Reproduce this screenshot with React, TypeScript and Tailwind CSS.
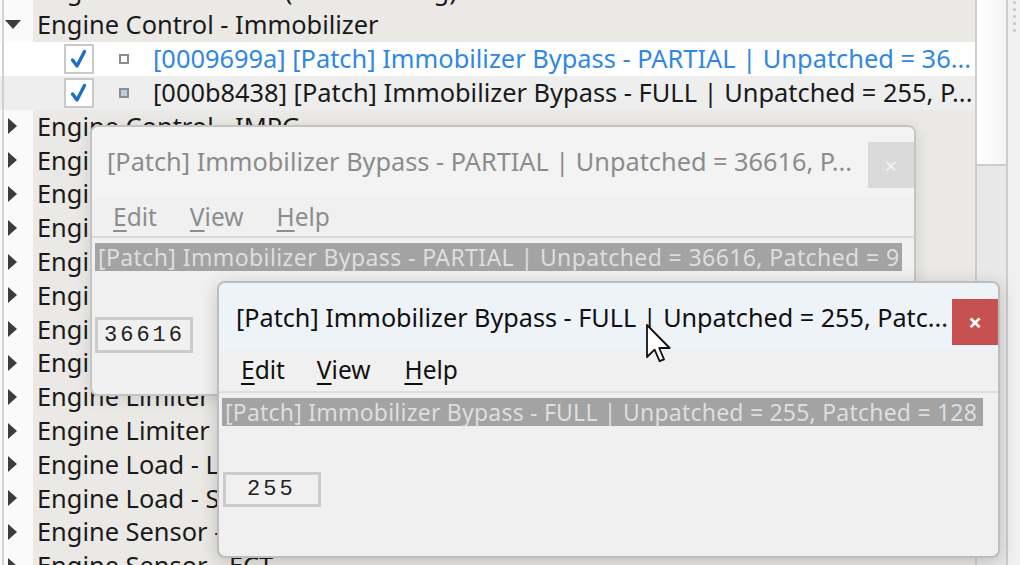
import React from "react";

const font = { fontFamily: '"Noto Sans", "Open Sans", sans-serif' };

type Row = { label: string; kind: "parent" | "open" | "child1" | "child2" };

const rows: Row[] = [
  { label: "Engine Control - Fan (After Cooling)", kind: "parent" },
  { label: "Engine Control - Immobilizer", kind: "open" },
  { label: "[0009699a] [Patch] Immobilizer Bypass - PARTIAL | Unpatched = 36...", kind: "child1" },
  { label: "[000b8438] [Patch] Immobilizer Bypass - FULL | Unpatched = 255, P...", kind: "child2" },
  { label: "Engine Control - IMPG", kind: "parent" },
  { label: "Engine Control - Injection", kind: "parent" },
  { label: "Engine Control - Idle", kind: "parent" },
  { label: "Engine Control - Knock", kind: "parent" },
  { label: "Engine Control - Lambda", kind: "parent" },
  { label: "Engine Control - Misfire", kind: "parent" },
  { label: "Engine Control - Timing", kind: "parent" },
  { label: "Engine Control - VVT", kind: "parent" },
  { label: "Engine Limiter - RPM", kind: "parent" },
  { label: "Engine Limiter - Speed", kind: "parent" },
  { label: "Engine Load - Limits", kind: "parent" },
  { label: "Engine Load - Scaling", kind: "parent" },
  { label: "Engine Sensor - Boost", kind: "parent" },
  { label: "Engine Sensor - ECT", kind: "parent" },
];

function Arrow({ open }: { open: boolean }) {
  return open ? (
    <svg width="16" height="10" viewBox="0 0 16 10" className="ml-[5px]">
      <path d="M0 0 L16 0 L8 9 Z" fill="#3c3c3c" />
    </svg>
  ) : (
    <svg width="10" height="16" viewBox="0 0 10 16" className="ml-[8px]">
      <path d="M0 0 L9 8 L0 16 Z" fill="#3c3c3c" />
    </svg>
  );
}

function Check() {
  return (
    <div className="w-[30px] h-[30px] border-2 border-[#c9c9c9] bg-white flex items-center justify-center shrink-0">
      <svg width="18" height="20" viewBox="0 0 18 20">
        <path d="M2.5 11 L7 17 L14.5 2.5" stroke="#1e6fc6" strokeWidth="3.4" fill="none" strokeLinecap="round" strokeLinejoin="round" />
      </svg>
    </div>
  );
}

function TreeRow({ row }: { row: Row }) {
  if (row.kind === "child1" || row.kind === "child2") {
    const bg = row.kind === "child1" ? "bg-white" : "bg-[#eeeeee]";
    const color = row.kind === "child1" ? "text-[#2f87e6]" : "text-[#1a1a1a]";
    const sq = row.kind === "child1" ? "bg-white" : "bg-[#b9cde0]";
    return (
      <div className={`h-[34px] flex items-center ${bg}`}>
        <div className="w-[64px] h-full flex">
          <div className="w-[2px] ml-[2px] h-full bg-[#d0d0d0]" />
        </div>
        <Check />
        <div className={`ml-[25px] w-[10px] h-[10px] border-2 border-[#8d8d8d] ${sq} shrink-0`} />
        <div className={`ml-[24px] whitespace-nowrap text-[25.4px] leading-none ${color}`} style={font}>
          {row.label}
        </div>
      </div>
    );
  }
  return (
    <div className="h-[33.8px] flex items-center">
      <div className="w-[33px] h-full flex items-center bg-[#fafafa] relative">
        <div className="absolute left-[2px] top-0 w-[2px] h-full bg-[#d6d6d6]" />
        <Arrow open={row.kind === "open"} />
      </div>
      <div className="flex-1 h-full bg-[#ebe9e5] flex items-center pl-[4px]">
        <span className="whitespace-nowrap text-[25.4px] leading-none text-[#1a1a1a]" style={font}>
          {row.label}
        </span>
      </div>
    </div>
  );
}

function Scrollbar() {
  return (
    <div className="flex h-full">
      <div className="w-[31px] h-full border-l-2 border-[#cdcdcd] bg-[#e8e8e8] flex flex-col">
        <div className="h-[166px] border-b-2 border-[#cdcdcd] bg-gradient-to-r from-white to-[#f4f4f4]" />
      </div>
      <div className="w-[14px] h-full border-l-2 border-[#cdcdcd] bg-[#f0f0f0] flex flex-col items-center pt-[1px] gap-[4px]">
        {[0, 1, 2, 3, 4].map((i) => (
          <div key={i} className="w-[3px] h-[3px] bg-[#c4c4c4] rounded-full" />
        ))}
      </div>
    </div>
  );
}

function Menu({ active }: { active: boolean }) {
  const c = active ? "text-[#111]" : "text-[#8d8d8d]";
  const gaps = active ? ["ml-[22px]", "ml-[32px]", "ml-[34px]"] : ["ml-[21px]", "ml-[33px]", "ml-[33px]"];
  return (
    <div className={`flex items-center text-[24.5px] ${c}`} style={font}>
      <span className={gaps[0]}>
        <span className="underline underline-offset-[4px] decoration-[2px]">E</span>dit
      </span>
      <span className={gaps[1]}>
        <span className="underline underline-offset-[4px] decoration-[2px]">V</span>iew
      </span>
      <span className={gaps[2]}>
        <span className="underline underline-offset-[4px] decoration-[2px]">H</span>elp
      </span>
    </div>
  );
}

function Cursor() {
  return (
    <svg width="28" height="40" viewBox="0 0 14 20" className="absolute left-[646px] top-[324px]">
      <path d="M0.5 0.5 L0.5 16.5 L4.3 12.8 L6.8 18.6 L9 17.7 L6.6 12 L11.8 12 Z" fill="white" stroke="#111" strokeWidth="0.9" strokeLinejoin="round" />
    </svg>
  );
}

const mono = { fontFamily: '"Liberation Mono", "DejaVu Sans Mono", monospace' };

export default function App() {
  return (
    <div className="w-[1020px] h-[565px] relative overflow-hidden bg-[#f0f0f0]" style={font}>
      <div className="flex h-full">
        <div className="w-[975px] h-full overflow-hidden">
          <div className="mt-[-26px]">
            {rows.map((r, i) => (
              <TreeRow key={i} row={r} />
            ))}
          </div>
        </div>
        <Scrollbar />
      </div>

      {/* Back (inactive) window */}
      <div className="absolute left-[90px] top-[125px] w-[826px] h-[271px] rounded-[8px] border-2 border-[#c4c4c4] bg-[#f0f0f0] overflow-hidden shadow-[0_4px_16px_rgba(0,0,0,0.12)] flex flex-col">
        <div className="h-[71px] bg-[#f3f3f3] flex items-start shrink-0">
          <div className="ml-[15px] mt-[16px] text-[25.3px] text-[#8c8c8c] whitespace-nowrap flex-1">
            [Patch] Immobilizer Bypass - PARTIAL | Unpatched = 36616, P...
          </div>
          <div className="w-[46px] h-[46px] mt-[15px] bg-[#dadada] flex items-center justify-center text-[#f4f4f4] text-[22px]">
            ×
          </div>
        </div>
        <div className="h-[40px] flex items-center border-b-2 border-[#dadada]">
          <Menu active={false} />
        </div>
        <div className="pl-[3px] pt-[5px]">
          <div className="inline-block bg-[#a3a3a3] text-[#dedede] text-[23px] leading-[28px] px-[3px] whitespace-nowrap tracking-[0.4px]">
            [Patch] Immobilizer Bypass - PARTIAL | Unpatched = 36616, Patched = 9
          </div>
        </div>
        <div className="pl-[3px] mt-[45px]">
          <div className="w-[98px] h-[36px] border-[3px] border-[#cbcbcb] flex items-center pl-[6px] text-[22px] tracking-[3px] text-[#222]" style={mono}>
            36616
          </div>
        </div>
      </div>

      {/* Front (active) window */}
      <div className="absolute left-[217px] top-[281px] w-[783px] h-[277px] rounded-[8px] border-2 border-[#bdbdbd] bg-[#f0f0f0] overflow-hidden shadow-[0_4px_18px_rgba(0,0,0,0.18)] flex flex-col">
        <div className="h-[67px] bg-[#eef3f8] flex items-start shrink-0">
          <div className="ml-[17px] mt-[16px] text-[25.2px] text-[#111] whitespace-nowrap flex-1">
            [Patch] Immobilizer Bypass - FULL | Unpatched = 255, Patc...
          </div>
          <div className="w-[46px] h-[46px] mt-[16px] bg-[#c75050] flex items-center justify-center text-white text-[24px] font-bold">
            ×
          </div>
        </div>
        <div className="h-[43px] flex items-center border-b-2 border-[#dedede]">
          <Menu active={true} />
        </div>
        <div className="pl-[3px] pt-[5px]">
          <div className="inline-block bg-[#a3a3a3] text-[#dedede] text-[23px] leading-[28px] pl-[3px] pr-[6px] whitespace-nowrap tracking-[0.22px]">
            [Patch] Immobilizer Bypass - FULL | Unpatched = 255, Patched = 128
          </div>
        </div>
        <div className="pl-[4px] mt-[45px]">
          <div className="w-[98px] h-[35px] border-[3px] border-[#cbcbcb] flex items-center pl-[21px] text-[22px] tracking-[3px] text-[#222]" style={mono}>
            255
          </div>
        </div>
      </div>

      <Cursor />
    </div>
  );
}
